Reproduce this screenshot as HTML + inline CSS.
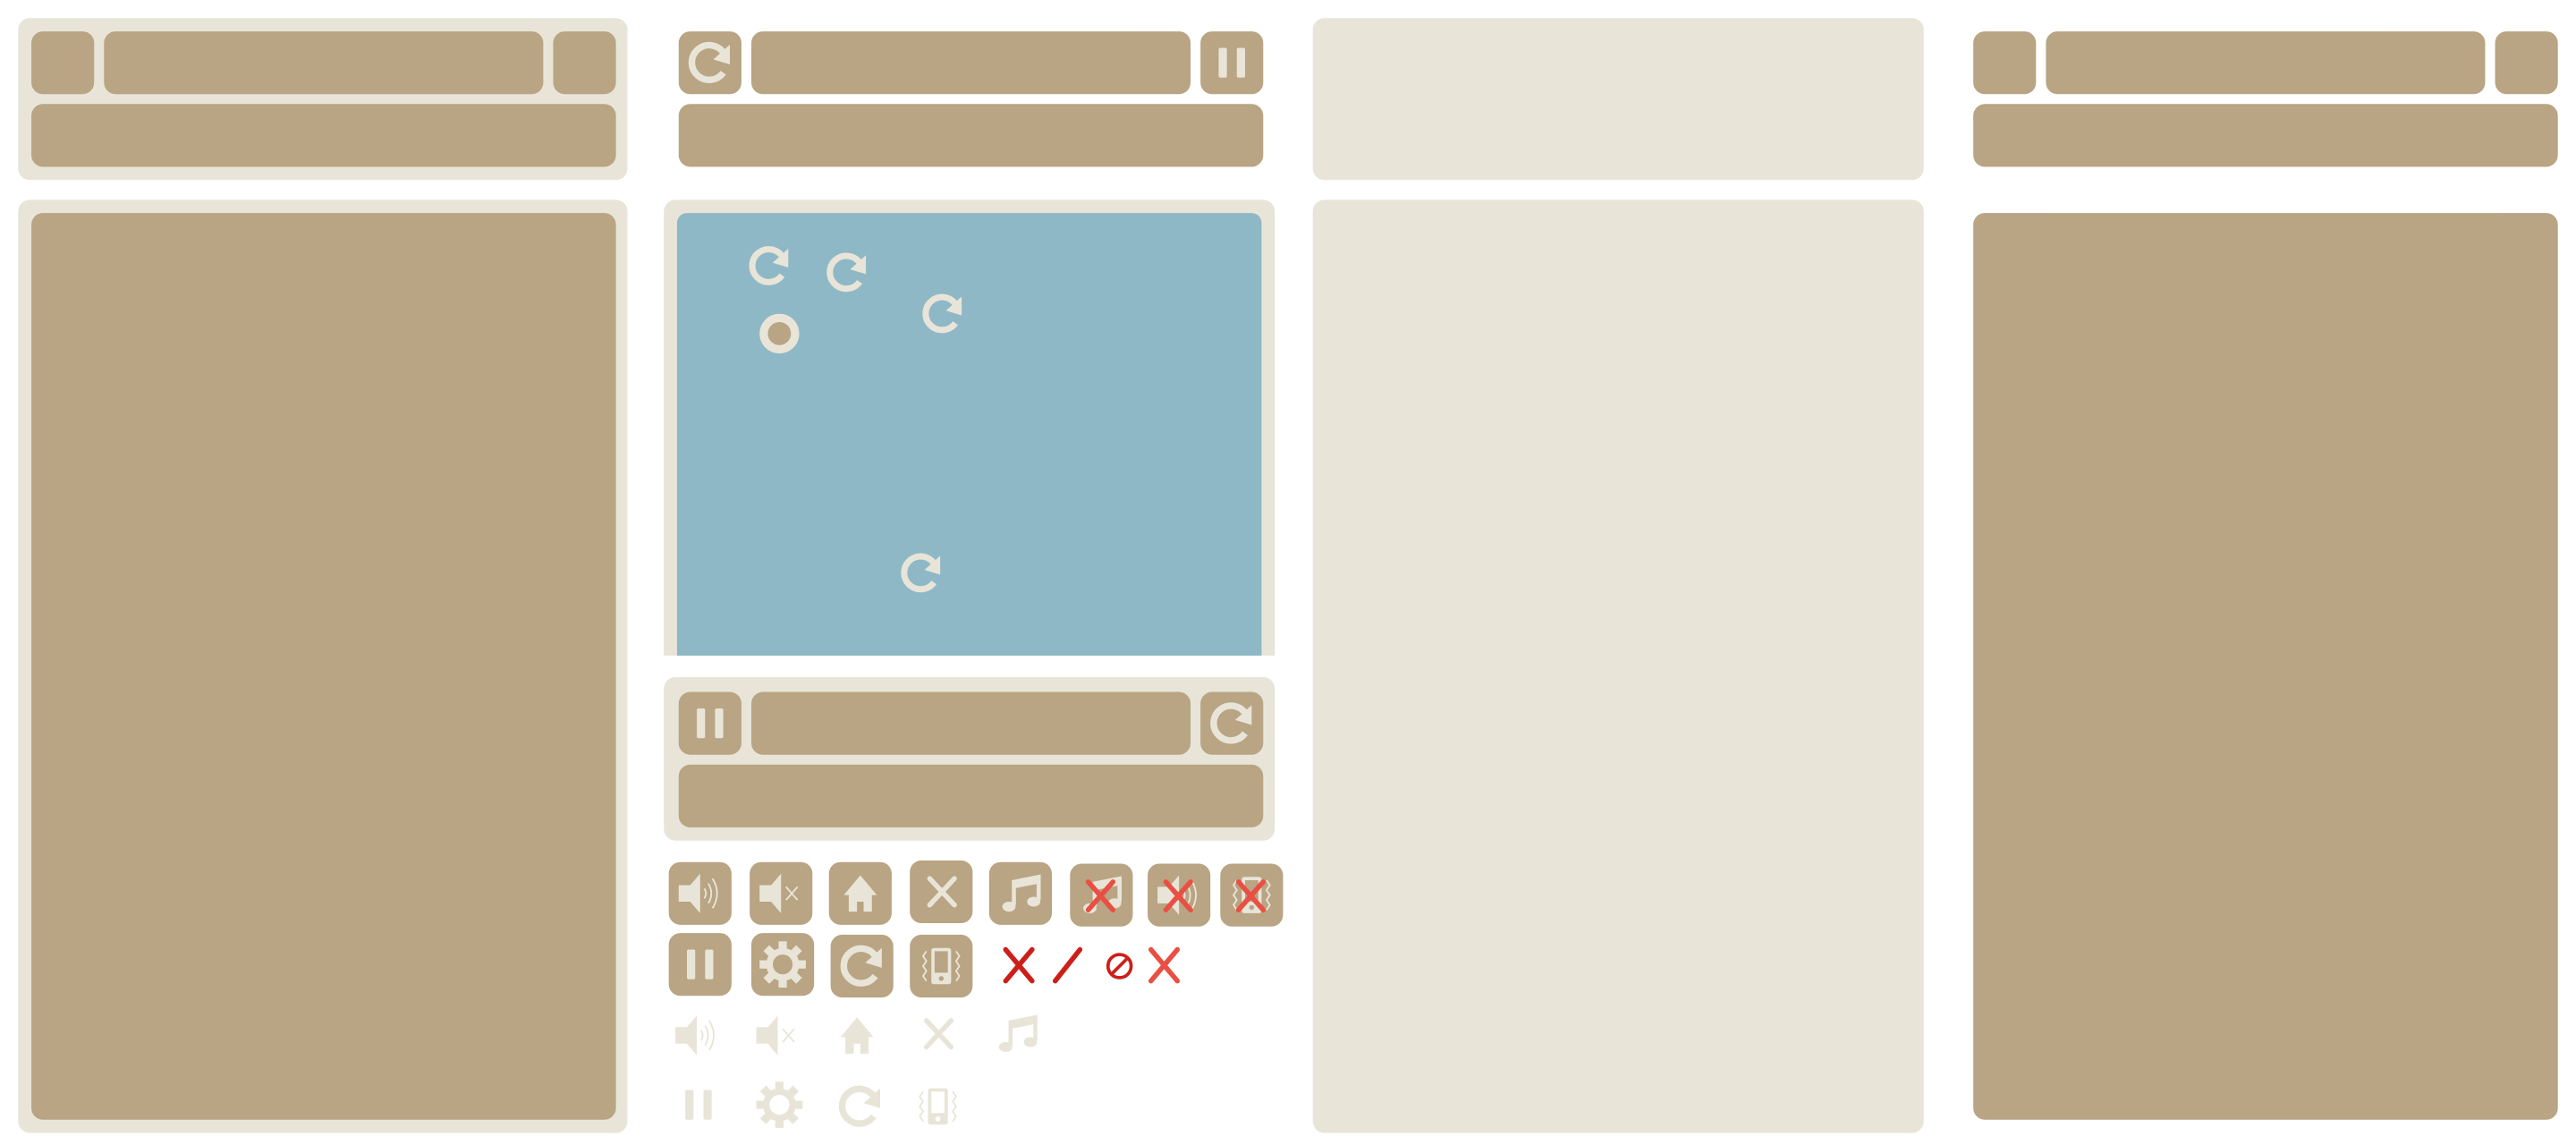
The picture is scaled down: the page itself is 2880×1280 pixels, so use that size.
<!DOCTYPE html>
<html><head><meta charset="utf-8">
<style>
html,body{margin:0;padding:0;background:#fff;width:2880px;height:1280px;overflow:hidden}
#s{position:absolute;left:0;top:0;width:1560px;height:693px;transform:scale(1.84615);transform-origin:0 0}
.a{position:absolute}
.c{background:#e8e5d8;border-radius:7px}
.b{background:#b9a483;border-radius:7px}
.bl{background:#8fb8c6;border-radius:6px 6px 0 0}
svg.i{position:absolute;width:38px;height:38px}
</style></head><body>
<svg width="0" height="0" style="position:absolute">
<defs>
<symbol id="ref" viewBox="0 0 38 38"><path d="M27.5 13.5 A10.5 10.5 0 1 0 27 25" fill="none" stroke="#e8e5d8" stroke-width="4"/><polygon points="31,8 31,20 21,17" fill="#e8e5d8"/></symbol>
<symbol id="pau" viewBox="0 0 38 38"><rect x="11" y="10" width="5" height="18" rx="1" fill="#e8e5d8"/><rect x="22" y="10" width="5" height="18" rx="1" fill="#e8e5d8"/></symbol>
<symbol id="spk" viewBox="0 0 38 38"><polygon points="6,14 13,14 19,7 19,31 13,24 6,24" fill="#e8e5d8"/><path d="M21.5 16 Q23.5 19 21.5 22 M24 13 Q27.5 19 24 25 M26.5 10 Q32 19 26.5 28" fill="none" stroke="#e8e5d8" stroke-width="1"/></symbol>
<symbol id="mut" viewBox="0 0 38 38"><polygon points="6,14 13,14 19,7 19,31 13,24 6,24" fill="#e8e5d8"/><path d="M22 15 L29 23 M29 15 L22 23" stroke="#e8e5d8" stroke-width="1"/></symbol>
<symbol id="hom" viewBox="0 0 38 38"><polygon points="19,8 29,20 26,20 26,30 21,30 21,24 17,24 17,30 12,30 12,20 9,20" fill="#e8e5d8"/></symbol>
<symbol id="x" viewBox="0 0 38 38"><path d="M12 11 L27 27 M27 11 L12 27" stroke="#e8e5d8" stroke-width="3" stroke-linecap="round"/></symbol>
<symbol id="mus" viewBox="0 0 38 38"><path d="M15 26 L15 12 L30 9 L30 23" fill="none" stroke="#e8e5d8" stroke-width="2.5"/><path d="M15 12 L30 9 L30 13 L15 16Z" fill="#e8e5d8"/><ellipse cx="12" cy="27" rx="4" ry="3" fill="#e8e5d8"/><ellipse cx="27" cy="24" rx="4" ry="3" fill="#e8e5d8"/></symbol>
<symbol id="gear" viewBox="0 0 38 38"><g fill="#e8e5d8"><circle cx="19" cy="19" r="10"/><rect x="16.5" y="5" width="5" height="28"/><rect x="5" y="16.5" width="28" height="5"/><rect x="16.5" y="5" width="5" height="28" transform="rotate(45 19 19)"/><rect x="16.5" y="5" width="5" height="28" transform="rotate(-45 19 19)"/></g><circle cx="19" cy="19" r="6" fill="#b9a483"/></symbol>
<symbol id="gearf" viewBox="0 0 38 38"><g fill="#e8e5d8"><circle cx="19" cy="19" r="10"/><rect x="16.5" y="5" width="5" height="28"/><rect x="5" y="16.5" width="28" height="5"/><rect x="16.5" y="5" width="5" height="28" transform="rotate(45 19 19)"/><rect x="16.5" y="5" width="5" height="28" transform="rotate(-45 19 19)"/></g><circle cx="19" cy="19" r="6" fill="#fff"/></symbol>
<symbol id="ph" viewBox="0 0 38 38"><rect x="13" y="8" width="12" height="22" rx="1.5" fill="#e8e5d8"/><rect x="15" y="10" width="8" height="13" fill="#b9a483"/><circle cx="19" cy="26.5" r="1.5" fill="#b9a483"/><path d="M10 10 L8 13 L10 16 L8 19 L10 22 L8 25 L10 28 M28 10 L30 13 L28 16 L30 19 L28 22 L30 25 L28 28" fill="none" stroke="#e8e5d8" stroke-width="1"/></symbol>
<symbol id="phf" viewBox="0 0 38 38"><rect x="13" y="8" width="12" height="22" rx="1.5" fill="#e8e5d8"/><rect x="15" y="10" width="8" height="13" fill="#fff"/><circle cx="19" cy="26.5" r="1.5" fill="#fff"/><path d="M10 10 L8 13 L10 16 L8 19 L10 22 L8 25 L10 28 M28 10 L30 13 L28 16 L30 19 L28 22 L30 25 L28 28" fill="none" stroke="#e8e5d8" stroke-width="1"/></symbol>
<symbol id="rx" viewBox="0 0 38 38"><path d="M11 11 L26 28 M26 11 L11 28" stroke="#e94f43" stroke-width="3" stroke-linecap="round"/></symbol>
</defs></svg>
<div id="s">
<div class="a c" style="left:11px;top:11px;width:369px;height:98px"></div>
<div class="a b" style="left:19px;top:19px;width:38px;height:38px"></div>
<div class="a b" style="left:63px;top:19px;width:266px;height:38px"></div>
<div class="a b" style="left:335px;top:19px;width:38px;height:38px"></div>
<div class="a b" style="left:19px;top:63px;width:354px;height:38px"></div>
<div class="a c" style="left:11px;top:121px;width:369px;height:565px"></div>
<div class="a b" style="left:19px;top:129px;width:354px;height:549px"></div>
<div class="a b" style="left:411px;top:19px;width:38px;height:38px"></div>
<svg class="i" style="left:411px;top:19px"><use href="#ref"/></svg>
<div class="a b" style="left:455px;top:19px;width:266px;height:38px"></div>
<div class="a b" style="left:727px;top:19px;width:38px;height:38px"></div>
<svg class="i" style="left:727px;top:19px"><use href="#pau"/></svg>
<div class="a b" style="left:411px;top:63px;width:354px;height:38px"></div>
<div class="a" style="left:402px;top:121px;width:370px;height:276px;background:#e8e5d8;border-radius:7px 7px 0 0"></div>
<div class="a bl" style="left:410px;top:129px;width:354px;height:268px"></div>
<svg class="i" style="left:448px;top:143px;width:36px;height:36px"><use href="#ref"/></svg>
<svg class="i" style="left:495px;top:147px;width:36px;height:36px"><use href="#ref"/></svg>
<svg class="i" style="left:553px;top:172px;width:36px;height:36px"><use href="#ref"/></svg>
<svg class="i" style="left:540px;top:329px;width:36px;height:36px"><use href="#ref"/></svg>
<div class="a" style="left:460px;top:190px;width:14px;height:14px;border:5px solid #e8e5d8;border-radius:50%;background:#b9a483"></div>
<div class="a c" style="left:402px;top:410px;width:370px;height:99px"></div>
<div class="a b" style="left:411px;top:419px;width:38px;height:38px"></div>
<svg class="i" style="left:411px;top:419px"><use href="#pau"/></svg>
<div class="a b" style="left:455px;top:419px;width:266px;height:38px"></div>
<div class="a b" style="left:727px;top:419px;width:38px;height:38px"></div>
<svg class="i" style="left:727px;top:419px"><use href="#ref"/></svg>
<div class="a b" style="left:411px;top:463px;width:354px;height:38px"></div>
<div class="a b" style="left:405px;top:522px;width:38px;height:38px"></div><svg class="i" style="left:405px;top:522px"><use href="#spk"/></svg>
<div class="a b" style="left:454px;top:522px;width:38px;height:38px"></div><svg class="i" style="left:454px;top:522px"><use href="#mut"/></svg>
<div class="a b" style="left:502px;top:522px;width:38px;height:38px"></div><svg class="i" style="left:502px;top:522px"><use href="#hom"/></svg>
<div class="a b" style="left:551px;top:521px;width:38px;height:38px"></div><svg class="i" style="left:551px;top:521px"><use href="#x"/></svg>
<div class="a b" style="left:599px;top:522px;width:38px;height:38px"></div><svg class="i" style="left:599px;top:522px"><use href="#mus"/></svg>
<div class="a b" style="left:648px;top:523px;width:38px;height:38px"></div><svg class="i" style="left:648px;top:523px"><use href="#mus"/><use href="#rx"/></svg>
<div class="a b" style="left:695px;top:523px;width:38px;height:38px"></div><svg class="i" style="left:695px;top:523px"><use href="#spk"/><use href="#rx"/></svg>
<div class="a b" style="left:739px;top:523px;width:38px;height:38px"></div><svg class="i" style="left:739px;top:523px"><use href="#ph"/><use href="#rx"/></svg>
<div class="a b" style="left:405px;top:565px;width:38px;height:38px"></div><svg class="i" style="left:405px;top:565px"><use href="#pau"/></svg>
<div class="a b" style="left:455px;top:565px;width:38px;height:38px"></div><svg class="i" style="left:455px;top:565px"><use href="#gear"/></svg>
<div class="a b" style="left:503px;top:566px;width:38px;height:38px"></div><svg class="i" style="left:503px;top:566px"><use href="#ref"/></svg>
<div class="a b" style="left:551px;top:566px;width:38px;height:38px"></div><svg class="i" style="left:551px;top:566px"><use href="#ph"/></svg>
<svg class="a" style="left:600px;top:570px" width="120" height="30" viewBox="0 0 120 30"><path d="M9 5 L25 24 M25 5 L9 24" stroke="#cc1f1a" stroke-width="3" stroke-linecap="round"/><path d="M39 24 L54 5" stroke="#cc1f1a" stroke-width="3" stroke-linecap="round"/><circle cx="78" cy="15" r="7" fill="none" stroke="#cc1f1a" stroke-width="2"/><path d="M73 20 L83 10" stroke="#cc1f1a" stroke-width="2"/><path d="M97 5 L113 24 M113 5 L97 24" stroke="#e94f43" stroke-width="3" stroke-linecap="round"/></svg>
<svg class="i" style="left:403px;top:608px"><use href="#spk"/></svg>
<svg class="i" style="left:452px;top:608px"><use href="#mut"/></svg>
<svg class="i" style="left:500px;top:608px"><use href="#hom"/></svg>
<svg class="i" style="left:549px;top:607px"><use href="#x"/></svg>
<svg class="i" style="left:597px;top:607px"><use href="#mus"/></svg>
<svg class="i" style="left:404px;top:650px"><use href="#pau"/></svg>
<svg class="i" style="left:453px;top:650px"><use href="#gearf"/></svg>
<svg class="i" style="left:502px;top:651px"><use href="#ref"/></svg>
<svg class="i" style="left:549px;top:651px"><use href="#phf"/></svg>
<div class="a c" style="left:795px;top:11px;width:370px;height:98px"></div>
<div class="a c" style="left:795px;top:121px;width:370px;height:565px"></div>
<div class="a b" style="left:1195px;top:19px;width:38px;height:38px"></div>
<div class="a b" style="left:1239px;top:19px;width:266px;height:38px"></div>
<div class="a b" style="left:1511px;top:19px;width:38px;height:38px"></div>
<div class="a b" style="left:1195px;top:63px;width:354px;height:38px"></div>
<div class="a b" style="left:1195px;top:129px;width:354px;height:549px"></div>
</div>
</body></html>
